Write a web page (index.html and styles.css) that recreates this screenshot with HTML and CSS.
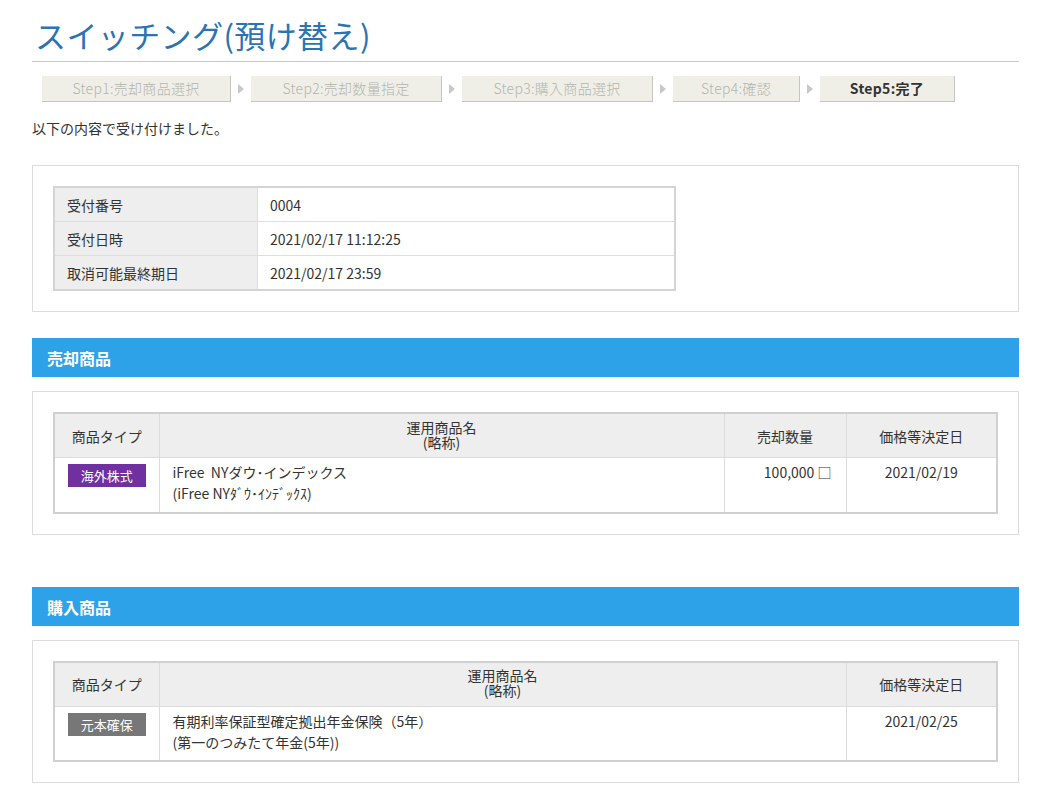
FILE: index.html
```html
<!DOCTYPE html>
<html lang="ja">
<head>
<meta charset="utf-8">
<link rel="stylesheet" href="styles.css">
</head>
<body>
<div class="page">
  <h1 class="title">スイッチング(預け替え)</h1>
  <div class="steps">
    <div class="step w1">Step1:売却商品選択</div>
    <div class="arrow"></div>
    <div class="step w2">Step2:売却数量指定</div>
    <div class="arrow"></div>
    <div class="step w3">Step3:購入商品選択</div>
    <div class="arrow"></div>
    <div class="step w4">Step4:確認</div>
    <div class="arrow"></div>
    <div class="step w5 current">Step5:完了</div>
  </div>
  <p class="message">以下の内容で受け付けました。</p>

  <div class="box first">
    <table class="info">
      <tr><th>受付番号</th><td>0004</td></tr>
      <tr><th>受付日時</th><td>2021/02/17 11:12:25</td></tr>
      <tr><th>取消可能最終期日</th><td>2021/02/17 23:59</td></tr>
    </table>
  </div>

  <h2 class="section">売却商品</h2>
  <div class="box">
    <table class="list">
      <colgroup>
        <col class="k-type"><col><col class="k-qty"><col class="k-date">
      </colgroup>
      <tr class="head">
        <th>商品タイプ</th>
        <th class="c-name"><span>運用商品名<br>(略称)</span></th>
        <th>売却数量</th>
        <th>価格等決定日</th>
      </tr>
      <tr class="row">
        <td class="c-type"><span class="badge purple">海外株式</span></td>
        <td class="c-name">iFree&nbsp; NYダウ･インデックス<br>(iFree NYﾀﾞｳ･ｲﾝﾃﾞｯｸｽ)</td>
        <td class="num">100,000 □</td>
        <td class="c-date">2021/02/19</td>
      </tr>
    </table>
  </div>

  <h2 class="section second">購入商品</h2>
  <div class="box">
    <table class="list">
      <colgroup>
        <col class="k-type"><col><col class="k-date">
      </colgroup>
      <tr class="head">
        <th>商品タイプ</th>
        <th class="c-name"><span>運用商品名<br>(略称)</span></th>
        <th>価格等決定日</th>
      </tr>
      <tr class="row">
        <td class="c-type"><span class="badge gray">元本確保</span></td>
        <td class="c-name">有期利率保証型確定拠出年金保険（5年）<br>(第一のつみたて年金(5年))</td>
        <td class="c-date">2021/02/25</td>
      </tr>
    </table>
  </div>
</div>
</body>
</html>
```

FILE: styles.css
```css
html, body {
  margin: 0;
  padding: 0;
  background: #fff;
}
body {
  font-family: "Noto Sans CJK JP", "Noto Sans", sans-serif;
  font-size: 14px;
  color: #333;
}
.page {
  width: 987px;
  padding: 0 0 40px 32px;
}
.title {
  margin: 0;
  padding: 13px 0 0 3px;
  box-sizing: border-box;
  height: 62px;
  border-bottom: 1px solid #c8c8c8;
  font-size: 31px;
  line-height: 44px;
  font-weight: 400;
  color: #2b74b2;
  letter-spacing: 0.4px;
}
.steps {
  display: flex;
  align-items: center;
  margin-top: 14px;
  padding-left: 10px;
}
.step {
  height: 26px;
  box-sizing: border-box;
  background: #efefe8;
  border-right: 1px solid #c6c6c0;
  border-bottom: 1px solid #c6c6c0;
  color: #b4b4ae;
  font-size: 14px;
  font-weight: 300;
  line-height: 25px;
  text-align: center;
  letter-spacing: 0.3px;
}
.w1 { width: 189px; }
.w2 { width: 191px; }
.w3 { width: 191px; }
.w4 { width: 127px; }
.w5 { width: 135px; }
.step.current {
  color: #333;
  font-weight: bold;
}
.arrow {
  width: 20px;
  height: 26px;
  position: relative;
}
.arrow::after {
  content: "";
  position: absolute;
  left: 7px;
  top: 8px;
  border-left: 6px solid #c8c8c8;
  border-top: 5px solid transparent;
  border-bottom: 5px solid transparent;
}
.message {
  margin: 15px 0 0;
  font-size: 14px;
  line-height: 22px;
  color: #333;
}
.box {
  border: 1px solid #dcdcdc;
  padding: 20px;
}
.box.first { margin-top: 26px; }
table {
  border-collapse: collapse;
}
.info {
  width: 623px;
  border: 2px solid #d4d4d4;
}
.info th, .info td {
  height: 33px;
  padding: 0 12px;
  border: 1px solid #dedede;
  text-align: left;
  font-weight: normal;
  font-size: 14px;
}
.info th {
  width: 178px;
  background: #eeeeee;
}
.section {
  margin: 26px 0 0;
  height: 39px;
  background: #2ea2e8;
  color: #fff;
  font-size: 16px;
  font-weight: bold;
  line-height: 40px;
  padding-left: 15px;
}
.section.second { margin-top: 52px; }
.section + .box { margin-top: 14px; }
.list {
  width: 945px;
  table-layout: fixed;
  border: 2px solid #d0d0d0;
}
.k-type { width: 105px; }
.k-qty { width: 122px; }
.k-date { width: 151px; }
.list th, .list td {
  border: 1px solid #dcdcdc;
  font-size: 14px;
  font-weight: normal;
}
.list .head th {
  height: 43px;
  background: #eeeeee;
  text-align: center;
  vertical-align: middle;
  padding: 0;
}
.list .head th.c-name span {
  display: inline-block;
  line-height: 15px;
}
.list .row td {
  height: 55px;
  vertical-align: top;
  padding: 4px 13px 0;
  line-height: 21px;
  box-sizing: border-box;
}
.list .row td.c-type {
  text-align: center;
  padding: 6px 0 0;
}
.list .row td.c-date { text-align: center; }
.list .row td.num { text-align: right; padding-right: 14px; }
.badge {
  display: inline-block;
  width: 78px;
  height: 23px;
  line-height: 23px;
  color: #fff;
  font-size: 13px;
  text-align: center;
  vertical-align: top;
}
.badge.purple { background: #7030a0; }
.badge.gray { background: #777777; }
```
